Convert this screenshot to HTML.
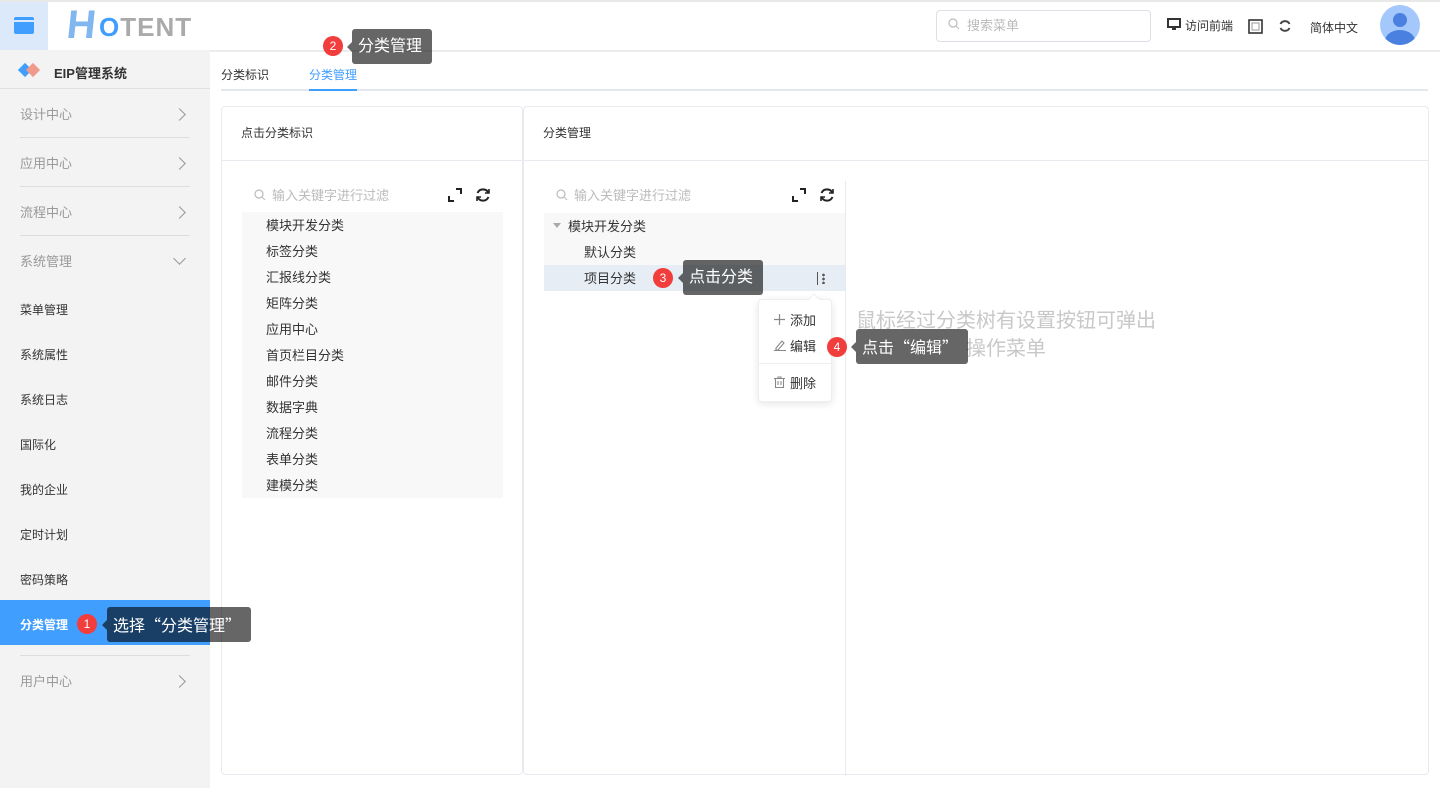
<!DOCTYPE html>
<html><head><meta charset="utf-8"><style>
*{box-sizing:border-box;margin:0;padding:0}
body{width:1440px;height:788px;overflow:hidden;background:#fff;font-family:"Liberation Sans","Noto Sans CJK SC",sans-serif;font-size:13px;color:#333;position:relative}
.a{position:absolute}
.q{font-family:"Noto Sans CJK SC",sans-serif}
.tip{position:absolute;background:rgba(0,0,0,0.6);color:#fff;font-size:16px;border-radius:3px;padding:0 10px 0 6px;height:35px;line-height:35px;white-space:nowrap}
.tip:before{content:"";position:absolute;left:-9px;top:13px;border:5px solid transparent;border-right-color:rgba(0,0,0,0.6);border-left:4px solid transparent}
.badge{position:absolute;width:20px;height:20px;border-radius:50%;background:#f23d3d;color:#fff;font-size:12px;text-align:center;line-height:20px}
.side{position:absolute;left:0;top:50px;width:210px;height:738px;background:#f3f3f3}
.grp{position:absolute;left:20px;width:170px;color:#999;font-size:13px}
.grp .chev{position:absolute;right:6px;top:6px;width:9px;height:9px;border-right:1.5px solid #999;border-top:1.5px solid #999;transform:rotate(45deg)}
.hr{position:absolute;left:20px;width:170px;height:1px;background:#ddd}
.item{position:absolute;left:20px;font-size:12px;color:#333}
.panel{position:absolute;top:106px;height:669px;border:1px solid #e8eaf0;border-radius:4px;background:#fff}
.ph{height:54px;border-bottom:1px solid #e8eaf0;line-height:54px;padding-left:19px;font-size:12px;color:#333}
.filter{position:absolute;color:#bbb;font-size:13px}
.tree div{height:26px;line-height:26px;font-size:13px;color:#333}
</style></head><body>
<div class="a" style="left:0;top:0;width:1440px;height:2px;background:#e8e8e8"></div>
<div class="a" style="left:0;top:50px;width:1440px;height:2px;background:#ececec"></div>
<div class="a" style="left:0;top:2px;width:48px;height:48px;background:#dce9fb"></div>
<div class="a" style="left:14px;top:17px;width:20px;height:17px;background:#409eff;border-radius:2px"></div>
<div class="a" style="left:14px;top:20px;width:20px;height:2px;background:#dce9fb"></div>
<div class="a" style="left:67px;top:6px;font-size:40px;font-weight:bold;color:#7fb7ee;line-height:38px;transform:skewX(-6deg)">H</div>
<div class="a" style="left:99px;top:13px;font-size:26px;font-weight:bold;line-height:28px;letter-spacing:1px"><span style="color:#409eff">O</span><span style="color:#aaa">TENT</span></div>

<div class="a" style="left:936px;top:10px;width:215px;height:32px;border:1px solid #dcdfe6;border-radius:4px"></div>
<svg class="a" style="left:948px;top:18px" width="12" height="12"><circle cx="5" cy="5" r="4" fill="none" stroke="#bbb" stroke-width="1.2"/><line x1="8" y1="8" x2="11" y2="11" stroke="#bbb"/></svg>
<div class="a" style="left:967px;top:15px;color:#bbb;font-size:13px">搜索菜单</div>
<svg class="a" style="left:1167px;top:18px" width="14" height="13"><rect x="1" y="1" width="12" height="8" fill="none" stroke="#333" stroke-width="2"/><rect x="5" y="10" width="4" height="2" fill="#333"/></svg>
<div class="a" style="left:1185px;top:17px;font-size:12px">访问前端</div>
<svg class="a" style="left:1248px;top:19px" width="15" height="15"><rect x="1" y="1" width="13" height="13" fill="none" stroke="#333" stroke-width="1.6"/><rect x="4" y="4" width="7" height="7" fill="none" stroke="#999" stroke-width="1"/></svg>
<svg class="a" style="left:1278px;top:19px" width="14" height="14" fill="none" stroke="#444" stroke-width="2"><path d="M11.5 5A5 5 0 0 0 2.5 5M2.5 9a5 5 0 0 0 9 0"/></svg>
<div class="a" style="left:1310px;top:19px;font-size:12px">简体中文</div>
<div class="a" style="left:1380px;top:5px;width:40px;height:40px;border-radius:50%;background:#a4c8fb;overflow:hidden"><div class="a" style="left:13px;top:8px;width:14px;height:14px;border-radius:50%;background:#4a80e0"></div><div class="a" style="left:5px;top:25px;width:30px;height:22px;border-radius:50%;background:#4a80e0"></div></div>

<div class="side">
<div class="a" style="left:20px;top:15px;width:10px;height:10px;background:#409eff;transform:rotate(45deg)"></div>
<div class="a" style="left:28px;top:15px;width:10px;height:10px;background:#f09a8c;transform:rotate(45deg)"></div>
<div class="a" style="left:54px;top:13px;font-size:13px;font-weight:bold;color:#333">EIP管理系统</div>
<div class="a" style="left:0;top:38px;width:210px;height:1px;background:#e0e0e0"></div>
<div class="grp" style="top:54px">设计中心<i class="chev"></i></div>
<div class="hr" style="top:87px"></div>
<div class="grp" style="top:103px">应用中心<i class="chev"></i></div>
<div class="hr" style="top:136px"></div>
<div class="grp" style="top:152px">流程中心<i class="chev"></i></div>
<div class="hr" style="top:185px"></div>
<div class="grp" style="top:201px">系统管理<i class="chev" style="transform:rotate(135deg);top:3px"></i></div>
<div class="item" style="top:251px">菜单管理</div>
<div class="item" style="top:296px">系统属性</div>
<div class="item" style="top:341px">系统日志</div>
<div class="item" style="top:386px">国际化</div>
<div class="item" style="top:431px">我的企业</div>
<div class="item" style="top:476px">定时计划</div>
<div class="item" style="top:521px">密码策略</div>
<div class="a" style="left:0;top:550px;width:210px;height:45px;background:#409eff"></div>
<div class="item" style="top:566px;color:#fff;font-weight:bold">分类管理</div>
<div class="hr" style="top:605px"></div>
<div class="grp" style="top:621px">用户中心<i class="chev"></i></div>
</div>

<div class="a" style="left:221px;top:66px;font-size:12px;color:#333">分类标识</div>
<div class="a" style="left:309px;top:66px;font-size:12px;color:#409eff">分类管理</div>
<div class="a" style="left:221px;top:89px;width:1207px;height:2px;background:#e4e7ed"></div>
<div class="a" style="left:309px;top:89px;width:48px;height:2px;background:#409eff"></div>

<div class="panel" style="left:221px;width:302px">
<div class="ph" style="line-height:52px">点击分类标识</div>
<svg class="a" style="left:32px;top:82px" width="12" height="12"><circle cx="5" cy="5" r="4" fill="none" stroke="#bbb" stroke-width="1.2"/><line x1="8" y1="8" x2="11" y2="11" stroke="#bbb"/></svg>
<div class="filter" style="left:50px;top:78px">输入关键字进行过滤</div>
<svg class="a" style="left:226px;top:81px" width="14" height="14" fill="none" stroke="#222" stroke-width="2"><path d="M1 8v5h5M13 6V1H8"/></svg>
<svg class="a" style="left:253px;top:80px" width="16" height="16" fill="none" stroke="#222" stroke-width="2"><path d="M13.5 6A6 6 0 0 0 2.5 6M2.5 10a6 6 0 0 0 11 0"/><path d="M14 2v4h-4M2 14v-4h4" stroke-width="1.6"/></svg>
<div class="tree a" style="left:20px;top:105px;width:261px;height:286px;background:#f8f8f8;padding-left:24px;padding-top:1px">
<div>模块开发分类</div><div>标签分类</div><div>汇报线分类</div><div>矩阵分类</div><div>应用中心</div><div>首页栏目分类</div><div>邮件分类</div><div>数据字典</div><div>流程分类</div><div>表单分类</div><div>建模分类</div>
</div>
</div>

<div class="panel" style="left:523px;width:906px">
<div class="ph" style="line-height:52px">分类管理</div>
<div class="a" style="left:321px;top:74px;width:1px;height:595px;background:#e8eaf0"></div>
<svg class="a" style="left:32px;top:82px" width="12" height="12"><circle cx="5" cy="5" r="4" fill="none" stroke="#bbb" stroke-width="1.2"/><line x1="8" y1="8" x2="11" y2="11" stroke="#bbb"/></svg>
<div class="filter" style="left:50px;top:78px">输入关键字进行过滤</div>
<svg class="a" style="left:268px;top:81px" width="14" height="14" fill="none" stroke="#222" stroke-width="2"><path d="M1 8v5h5M13 6V1H8"/></svg>
<svg class="a" style="left:295px;top:80px" width="16" height="16" fill="none" stroke="#222" stroke-width="2"><path d="M13.5 6A6 6 0 0 0 2.5 6M2.5 10a6 6 0 0 0 11 0"/><path d="M14 2v4h-4M2 14v-4h4" stroke-width="1.6"/></svg>
<div class="a" style="left:20px;top:106px;width:301px;height:78px;background:#f8f8f8"></div>
<div class="a" style="left:20px;top:158px;width:301px;height:26px;background:#e6edf5"></div>
<div class="a" style="left:29px;top:116px;border:4px solid transparent;border-top:5px solid #aaa"></div>
<div class="a" style="left:44px;top:109px">模块开发分类</div>
<div class="a" style="left:60px;top:135px">默认分类</div>
<div class="a" style="left:60px;top:161px">项目分类</div>
<div class="a" style="left:293px;top:165px;width:1px;height:13px;background:#555"></div>
<div class="a" style="left:298px;top:166px;width:3px;height:11px;background:radial-gradient(circle,#555 1.2px,transparent 1.5px) 0 0/3px 4px"></div>
<div class="a" style="left:234px;top:192px;width:74px;height:103px;background:#fff;border:1px solid #eee;border-radius:4px;box-shadow:0 2px 8px rgba(0,0,0,0.1)"></div>
<div class="a" style="left:286px;top:188px;width:8px;height:8px;background:#fff;transform:rotate(45deg);border-left:1px solid #eee;border-top:1px solid #eee"></div>
<svg class="a" style="left:250px;top:207px" width="11" height="11" stroke="#888" stroke-width="1.2"><path d="M5.5 0v11M0 5.5h11"/></svg><div class="a" style="left:266px;top:203px">添加</div>
<svg class="a" style="left:250px;top:232px" width="12" height="12" fill="none" stroke="#888" stroke-width="1.1"><path d="M2 9l6-7 2 2-6 7H2z M0 11.5h12"/></svg><div class="a" style="left:266px;top:229px">编辑</div>
<div class="a" style="left:234px;top:256px;width:74px;height:1px;background:#eee"></div>
<svg class="a" style="left:250px;top:269px" width="11" height="12" fill="none" stroke="#888" stroke-width="1.1"><path d="M0 2.5h11M4 2.5V1h3v1.5M1.5 2.5v9h8v-9M4 5v4M7 5v4"/></svg><div class="a" style="left:266px;top:266px">删除</div>
<div class="a" style="left:332px;top:200px;font-size:20px;color:#c8c8c8;line-height:28px;width:300px;text-align:center">鼠标经过分类树有设置按钮可弹出<br>操作菜单</div>
</div>

<div class="badge" style="left:77px;top:614px">1</div>
<div class="tip" style="left:107px;top:607px">选择<span class="q">“</span>分类管理<span class="q">”</span></div>
<div class="badge" style="left:323px;top:36px">2</div>
<div class="tip" style="left:352px;top:29px">分类管理</div>
<div class="badge" style="left:653px;top:268px">3</div>
<div class="tip" style="left:683px;top:260px">点击分类</div>
<div class="badge" style="left:827px;top:337px">4</div>
<div class="tip" style="left:856px;top:329px">点击<span class="q">“</span>编辑<span class="q">”</span></div>
</body></html>
